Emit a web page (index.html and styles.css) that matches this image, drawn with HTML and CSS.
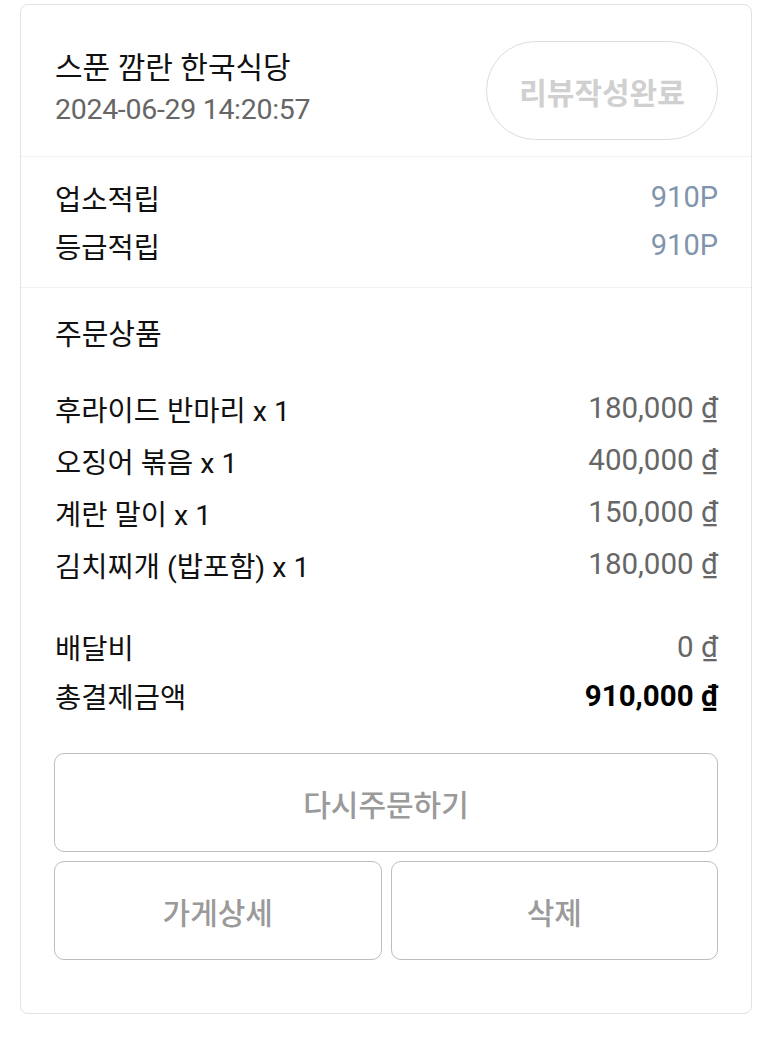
FILE: index.html
```html
<!DOCTYPE html>
<html lang="ko">
<head>
<meta charset="utf-8">
<link rel="stylesheet" href="styles.css">
</head>
<body>
<div class="card">
  <div class="header">
    <div class="store">
      <div class="store-name">스푼 깜란 한국식당</div>
      <div class="store-date">2024-06-29 14:20:57</div>
    </div>
    <div class="review-btn">리뷰작성완료</div>
  </div>
  <div class="points">
    <div class="row"><span>업소적립</span><span class="pt">910P</span></div>
    <div class="row"><span>등급적립</span><span class="pt">910P</span></div>
  </div>
  <div class="order">
    <div class="order-title">주문상품</div>
    <div class="items">
      <div class="item"><span>후라이드 반마리 x 1</span><span class="price">180,000 ₫</span></div>
      <div class="item"><span>오징어 볶음 x 1</span><span class="price">400,000 ₫</span></div>
      <div class="item"><span>계란 말이 x 1</span><span class="price">150,000 ₫</span></div>
      <div class="item"><span>김치찌개 (밥포함) x 1</span><span class="price">180,000 ₫</span></div>
    </div>
    <div class="totals">
      <div class="trow"><span>배달비</span><span class="price">0 ₫</span></div>
      <div class="trow"><span>총결제금액</span><span class="total">910,000 ₫</span></div>
    </div>
    <div class="actions">
      <div class="btn">다시주문하기</div>
      <div class="btn-row">
        <div class="btn">가게상세</div>
        <div class="btn">삭제</div>
      </div>
    </div>
  </div>
</div>
</body>
</html>
```

FILE: styles.css
```css
* { box-sizing: border-box; }
html, body { margin: 0; padding: 0; background: #fff; }
body {
  font-family: Roboto, "Noto Sans CJK KR", sans-serif;
  color: #111;
}
.card {
  margin: 4px 21px 0 20px;
  border: 1px solid #e2e2e2;
  border-radius: 8px;
  height: 1010px;
}
.header {
  height: 152px;
  border-bottom: 1px solid #f1f1f1;
  padding: 36px 33px 0 34px;
  display: flex;
  justify-content: space-between;
  align-items: flex-start;
}
.store { margin-top: 7px; }
.store-name {
  font-size: 30px;
  line-height: 40px;
  color: #111;
}
.store-date {
  font-size: 28.5px;
  line-height: 40px;
  margin-top: 2px;
  color: #666;
  letter-spacing: -0.3px;
}
.review-btn {
  width: 232px;
  height: 99px;
  border: 1.5px solid #dcdcdc;
  border-radius: 50px;
  display: flex;
  align-items: center;
  justify-content: center;
  font-size: 30px;
  font-weight: 700;
  color: #d0d0d0;
}
.points {
  padding: 16px 33px 18px 34px;
  border-bottom: 1px solid #f1f1f1;
}
.row, .item, .trow {
  display: flex;
  justify-content: space-between;
  align-items: center;
  font-size: 28.5px;
}
.row { height: 48px; }
.pt { color: #8194ad; font-size: 29px; }
.order { padding: 23px 33px 0 33px; }
.order-title {
  font-size: 29px;
  line-height: 48px;
  padding-left: 1px;
}
.items, .totals { padding-left: 1px; }
.items { margin-top: 23px; }
.item { height: 52px; }
.price { color: #666; font-size: 29.5px; }
.totals { margin-top: 32px; }
.trow { height: 49px; }
.total { font-weight: 700; font-size: 29.5px; color: #000; }
.actions {
  margin-top: 33px;
  display: flex;
  flex-direction: column;
  gap: 9px;
}
.btn {
  height: 99px;
  border: 1.5px solid #bdbdbd;
  border-radius: 10px;
  display: flex;
  align-items: center;
  justify-content: center;
  font-size: 30px;
  font-weight: 500;
  color: #9a9a9a;
}
.btn-row {
  display: flex;
  gap: 9px;
}
.btn-row .btn { flex: 1; }
```
